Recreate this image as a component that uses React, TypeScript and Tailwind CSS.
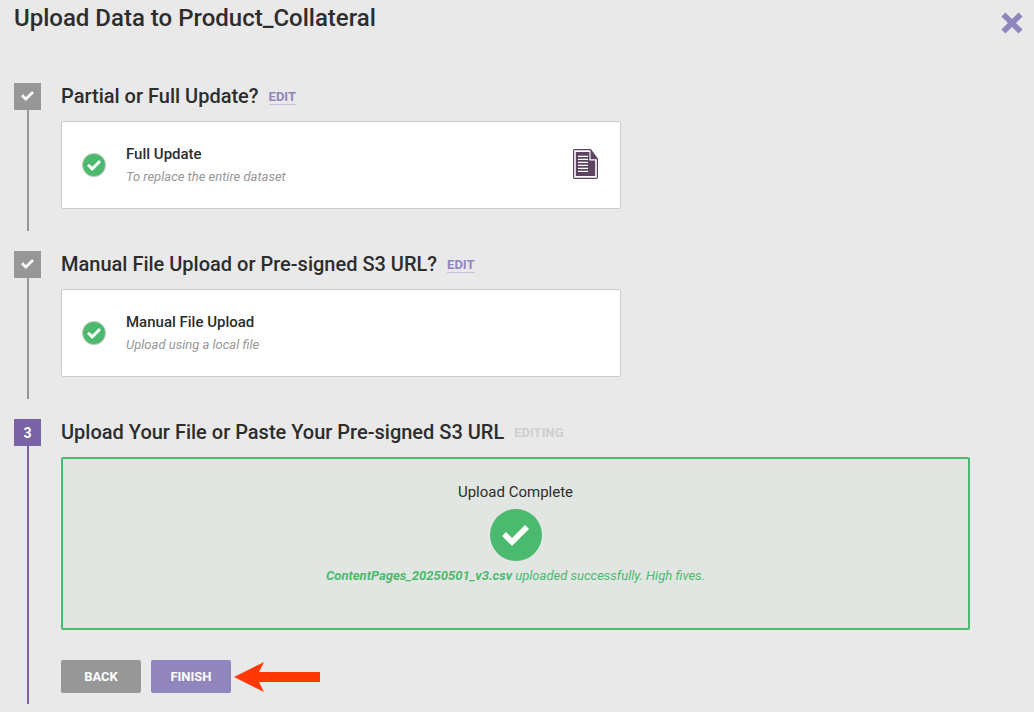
import type { ReactNode } from 'react'

interface StepProps {
  title: string
  marker: ReactNode
  status: ReactNode
  active?: boolean
  children: ReactNode
}

interface ChoiceCardProps {
  title: string
  description: string
  icon?: ReactNode
}

function CheckIcon({ className }: { className: string }) {
  return (
    <svg viewBox="0 0 27 21" className={className} fill="currentColor" aria-hidden="true">
      <path d="M0 11 L4 7 L10 13 L23 0 L27 4 L10 21 Z" />
    </svg>
  )
}

function CloseIcon() {
  return (
    <svg viewBox="0 0 22 22" className="size-[22px]" fill="none" stroke="currentColor" strokeWidth="5.6" strokeLinejoin="round" aria-hidden="true">
      <path d="M2.4 2.4 L19.6 19.6 M19.6 2.4 L2.4 19.6" />
    </svg>
  )
}

function DocumentIcon() {
  return (
    <svg viewBox="0 0 25 30" className="h-[30px] w-[25px]" aria-hidden="true">
      <path d="M1.5 0.6 H17.5 L24.4 10 V28.3 Q24.4 29.4 23.3 29.4 H1.7 Q0.6 29.4 0.6 28.3 V1.5 Q0.6 0.6 1.5 0.6 Z" fill="#fff" stroke="#5c4460" strokeWidth="1.2" />
      <path d="M2.8 3 H16.4 V11.4 H22.2 V27 H2.8 Z" fill="#5c4460" />
      <path d="M17.5 0.6 L24.6 10.2 H17.5 Z" fill="#5c4460" />
      <path d="M5 7.3 H15 M5 10.3 H15 M5 13.3 H15 M5 16.3 H15 M5 19.3 H15 M5 22.3 H15" stroke="#fff" strokeWidth="1.2" />
    </svg>
  )
}

function ArrowIcon() {
  return (
    <svg viewBox="0 0 86 30" className="ml-[3px] h-[30px] w-[86px]" fill="#ff3806" aria-hidden="true">
      <path d="M0 15 L30 0 L25 10 H86 V20 H25 L30 30 Z" />
    </svg>
  )
}

function EditLink() {
  return (
    <a href="#edit" className="mt-1.5 border-b border-[#c5c0dc] text-[13px] leading-[15px] font-bold text-[#9185be]">
      EDIT
    </a>
  )
}

function Step({ title, marker, status, active = false, children }: StepProps) {
  return (
    <li className="flex gap-5">
      <div className="flex w-[27px] shrink-0 flex-col items-center">
        <div
          className={`flex size-[27px] items-center justify-center text-sm font-bold text-white ${
            active ? 'bg-[#7a62a6]' : 'bg-[#979797]'
          }`}
        >
          {marker}
        </div>
        <div className={`w-0.5 flex-1 ${active ? 'bg-[#7a62a6]' : 'bg-[#979797]'}`} />
      </div>
      <section className="min-w-0 flex-1">
        <div className="mb-2.5 flex h-7 items-start gap-2.5">
          <h2 className="text-xl leading-[26px] font-medium">{title}</h2>
          {status}
        </div>
        {children}
      </section>
    </li>
  )
}

function ChoiceCard({ title, description, icon }: ChoiceCardProps) {
  return (
    <div className="mb-[22px] flex h-[88px] max-w-[560px] items-center rounded-xs border border-[#cbcbcb] bg-white px-5">
      <span className="flex size-6 items-center justify-center rounded-full border border-[#b9c9be] bg-[#4bba6e] text-white">
        <CheckIcon className="h-[11px] w-3.5" />
      </span>
      <div className="ml-5 flex-1">
        <h3 className="mb-0.5 text-[15px] leading-[22px] font-medium">{title}</h3>
        <p className="text-[13px] leading-5 text-[#979797] italic">{description}</p>
      </div>
      {icon && <span className="mr-0.5 mb-0.5">{icon}</span>}
    </div>
  )
}

export default function App() {
  return (
    <main className="min-h-screen bg-[#e9e9e9] pr-[11px] pb-2 pl-3.5 font-['Roboto',sans-serif] text-[#2d2d2d]">
      <header className="flex h-[83px] items-start justify-between">
        <h1 className="pt-0.5 text-2xl leading-8 font-medium">Upload Data to Product_Collateral</h1>
        <button type="button" aria-label="Close" className="mt-3 text-[#9185be]">
          <CloseIcon />
        </button>
      </header>

      <ol className="mr-[53px] flex flex-col gap-5">
        <Step title="Partial or Full Update?" marker={<CheckIcon className="mb-px h-2.5 w-[13px]" />} status={<EditLink />}>
          <ChoiceCard title="Full Update" description="To replace the entire dataset" icon={<DocumentIcon />} />
        </Step>

        <Step
          title="Manual File Upload or Pre-signed S3 URL?"
          marker={<CheckIcon className="mb-px h-2.5 w-[13px]" />}
          status={<EditLink />}
        >
          <ChoiceCard title="Manual File Upload" description="Upload using a local file" />
        </Step>

        <Step
          title="Upload Your File or Paste Your Pre-signed S3 URL"
          marker="3"
          status={<span className="mt-1.5 text-[13px] leading-[15px] font-bold text-[#cfcfcf]">EDITING</span>}
          active
        >
          <div className="flex flex-col items-center rounded-xs border-2 border-[#4bba6e] bg-[#e1e6e2] px-5 pt-[21px] pb-[42px]">
            <p className="text-[15px] leading-6">Upload Complete</p>
            <span className="my-[5px] flex size-[52px] items-center justify-center rounded-full bg-[#4bba6e] text-white">
              <CheckIcon className="h-[21px] w-[27px]" />
            </span>
            <p className="text-[13px] leading-5 text-[#4bba6e] italic">
              <strong className="font-bold">ContentPages_20250501_v3.csv</strong> uploaded successfully. High fives.
            </p>
          </div>
          <div className="mt-[30px] mb-[11px] flex items-center">
            <button type="button" className="h-[33px] w-20 rounded-xs bg-[#979797] text-[13px] font-bold text-white">
              BACK
            </button>
            <button type="button" className="ml-2.5 h-[33px] w-20 rounded-xs bg-[#9185be] text-[13px] font-bold text-white">
              FINISH
            </button>
            <ArrowIcon />
          </div>
        </Step>
      </ol>
    </main>
  )
}
